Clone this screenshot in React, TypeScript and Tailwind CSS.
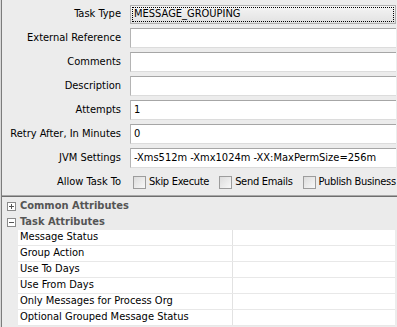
import React from "react";

const font = { fontFamily: '"DejaVu Sans Condensed", "DejaVu Sans", sans-serif' };

function Field({ value }: { value?: string }) {
  return (
    <div className="flex-1 min-w-0 h-[20px] bg-white border-t border-l border-t-[#a6a6a6] border-l-[#b4b4b4] border-b border-b-[#dcdcdc] flex items-center pl-[3px] text-[11px] text-black whitespace-nowrap overflow-hidden">
      {value}
    </div>
  );
}

function Label({ text }: { text: string }) {
  return (
    <div className="w-[128px] shrink-0 pr-[9px] text-right text-[11px] text-black whitespace-nowrap">{text}</div>
  );
}

function Row({ label, children }: { label: string; children: React.ReactNode }) {
  return (
    <div className="flex items-center h-[20px]">
      <Label text={label} />
      {children}
    </div>
  );
}

function Check({ label }: { label: string }) {
  return (
    <div className="flex items-center whitespace-nowrap shrink-0">
      <div className="w-[13px] h-[13px] border border-[#9c9c9c] bg-gradient-to-br from-[#dcdcdc] to-[#f8f8f8]" />
      <span className="ml-[3px] text-[11px] text-black tracking-[-0.3px]">{label}</span>
    </div>
  );
}

function Box({ plus }: { plus?: boolean }) {
  return (
    <div className="relative w-[9px] h-[9px] border border-[#8a8a8a] bg-white">
      <div className="absolute left-[1px] top-[3px] w-[5px] h-[1px] bg-[#555]" />
      {plus && <div className="absolute left-[3px] top-[1px] w-[1px] h-[5px] bg-[#555]" />}
    </div>
  );
}

const tableRows = [
  "Message Status",
  "Group Action",
  "Use To Days",
  "Use From Days",
  "Only Messages for Process Org",
  "Optional Grouped Message Status",
];

export default function App() {
  return (
    <div
      style={font}
      className="w-[397px] h-[327px] bg-[#ececec] overflow-hidden flex"
    >
      <div className="w-[1px] shrink-0 bg-[#d8d8d8]" />
      <div className="w-[1px] shrink-0 bg-[#7c7c7c]" />
      <div className="flex-1 min-w-0 flex flex-col">
        <div className="flex flex-col gap-[4px] pt-[4px] pr-[1px]">
          <div className="flex items-center h-[20px]">
            <Label text="Task Type" />
            <div className="flex-1 min-w-0 h-[19px] border border-[#b0b0b0] bg-gradient-to-b from-[#f4f4f4] to-[#e2e2e2] p-[1px]">
              <div className="h-full border border-dotted border-black flex items-center pl-[1px] text-[11px] text-black whitespace-nowrap">
                MESSAGE_GROUPING
              </div>
            </div>
          </div>
          <Row label="External Reference"><Field /></Row>
          <Row label="Comments"><Field /></Row>
          <Row label="Description"><Field /></Row>
          <Row label="Attempts"><Field value="1" /></Row>
          <Row label="Retry After, In Minutes"><Field value="0" /></Row>
          <Row label="JVM Settings"><Field value="-Xms512m -Xmx1024m -XX:MaxPermSize=256m" /></Row>
          <div className="flex items-center h-[20px] overflow-hidden">
            <Label text="Allow Task To" />
            <div className="flex items-center gap-[10px] ml-[3px]">
              <Check label="Skip Execute" />
              <Check label="Send Emails" />
              <Check label="Publish Business" />
            </div>
          </div>
        </div>
        <div className="mt-[3px] h-[1px] bg-[#a8a8a8]" />
        <div className="h-[1px] bg-[#6e6e6e]" />
        <div className="h-[1px] bg-[#ebebeb]" />
        <div className="flex items-center h-[16px] pl-[5px] gap-[4px] bg-[#ebebeb]">
          <Box plus />
          <span className="text-[11px] font-bold text-[#555]">Common Attributes</span>
        </div>
        <div className="flex items-center h-[16px] pl-[5px] gap-[4px] bg-[#ebebeb]">
          <Box />
          <span className="text-[11px] font-bold text-[#555]">Task Attributes</span>
        </div>
        <div className="ml-[16px] mr-[2px] bg-white flex flex-col">
          {tableRows.map((r) => (
            <div key={r} className="flex h-[16px] border-b border-[#e8e8e8]">
              <div className="w-[215px] shrink-0 border-r border-[#e2e2e2] pl-[2px] flex items-center text-[11px] text-black whitespace-nowrap">
                {r}
              </div>
              <div className="flex-1" />
            </div>
          ))}
        </div>
      </div>
    </div>
  );
}
